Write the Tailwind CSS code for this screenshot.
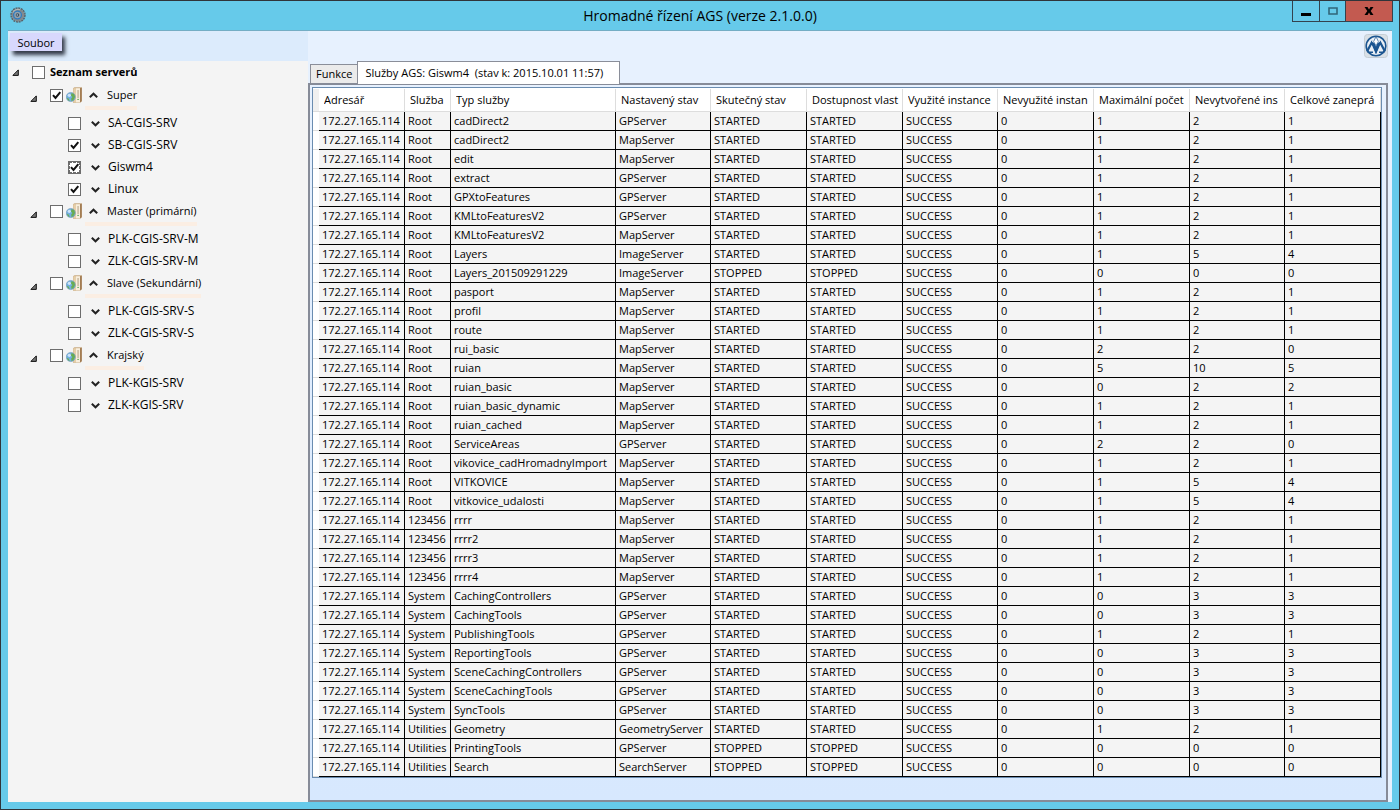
<!DOCTYPE html>
<html lang="cs">
<head>
<meta charset="utf-8">
<title>Hromadné řízení AGS</title>
<script src="https://cdn.jsdelivr.net/npm/@tailwindcss/browser@4"></script>
</head>
<body class="font-['Open_Sans','Noto_Sans',sans-serif] text-[11px] text-black">
<div class="flex min-h-screen flex-col border border-[#30343a] bg-[#66caea] px-[7px] pb-[7px]">
  <header class="grid h-[29px] grid-cols-[1fr_auto_1fr] items-start">
    <svg class="mt-[6px] ml-[2px] size-4" viewBox="0 0 16 16" aria-hidden="true">
      <circle cx="8" cy="8" r="6.900" fill="none" stroke="#596067" stroke-width="1.600" stroke-dasharray="2 0.710"/>
      <circle cx="8" cy="8" r="6.400" fill="#83888c"/>
      <path d="M3 5.500A5.600 5.600 0 0 1 10 2.800" fill="none" stroke="#b3b6b8" stroke-width="1.200"/>
      <circle cx="7.500" cy="8" r="3.900" fill="#92a1ad" stroke="#2e7cc0" stroke-width="1.300"/>
      <circle cx="7.500" cy="8" r="1.800" fill="#3c4d5c"/>
      <circle cx="7.300" cy="8" r="0.800" fill="#a9c8e0"/>
    </svg>
    <h1 class="text-[14px] leading-[29px]">Hromadné řízení AGS (verze 2.1.0.0)</h1>
    <div class="-mr-px flex h-[21px] justify-self-end border border-t-0 border-[#33424e]">
      <button type="button" aria-label="Minimalizovat" class="flex w-[27px] items-center justify-center border-r border-[#33424e]"><svg class="size-3" viewBox="0 0 12 12"><path d="M1 8h10v3H1z"/></svg></button>
      <button type="button" aria-label="Maximalizovat" class="flex w-[26px] items-center justify-center border-r border-[#33424e]"><svg class="size-3" viewBox="0 0 12 12"><path d="M2 3h8v6H2z" fill="none" stroke="#31667a" stroke-width="1.6"/></svg></button>
      <button type="button" aria-label="Zavřít" class="flex w-[46px] items-center justify-center bg-[#c35a50]"><svg class="size-3" viewBox="0 0 12 12"><path d="M1.5 2h3L6 4.4 7.500 2h3L7.700 6l2.800 4h-3L6 7.600 4.500 10h-3L4.300 6z"/></svg></button>
    </div>
  </header>

  <div class="flex grow flex-col border-t border-[#74adc4] bg-[#e7f1fe]">
    <div class="flex h-[30px]">
      <nav class="w-[300px] bg-[#dcebfc] pt-[2px] pl-[2px]">
        <button type="button" class="h-[18px] w-[52px] bg-[#d8d8fd] text-center leading-[20px] shadow-[3px_4px_4px_0px_#333a48]">Soubor</button>
      </nav>
      <div class="flex grow justify-end pt-[3px] pr-1">
        <svg class="size-6" viewBox="0 0 24 24" role="img" aria-label="Logo">
          <rect x="0.500" y="0.500" width="23" height="23" rx="3" fill="#d9e0e6" stroke="#c5ced6"/>
          <circle cx="12" cy="12" r="9.800" fill="#e9eff5" stroke="#1b5590" stroke-width="1.600"/>
          <path d="M3 17.600 7.900 8.200 12 17.500 16.100 8.200 21 17.600" fill="none" stroke="#1b5590" stroke-width="2.200"/>
          <path d="M3.500 18.200H9M15 18.200H20.500" stroke="#1b5590" stroke-width="1.400"/>
          <path d="M8 9.500 10 8 12 12.500 14 8 16 9.500 12 20z" fill="#1b5590"/>
          <path d="M9.600 7.600 12 2.600l2.400 5L12 11.800z" fill="#fff" stroke="#1b5590" stroke-width="0.700"/>
          <path d="M9.300 8.500 7.600 5.800M14.700 8.500l1.700-2.700" stroke="#fff" stroke-width="0.900"/>
        </svg>
      </div>
    </div>

    <div class="flex grow">
      <aside class="w-[300px] shrink-0 bg-[#f4f4f4]" id="tree" aria-label="Seznam serverů"></aside>
      <main class="flex min-w-0 grow flex-col pr-1">
        <div role="tablist" class="flex items-end pl-[2px]">
          <button role="tab" type="button" class="h-[19px] border border-b-0 border-[#8a8e99] bg-[#ebebeb] px-[5px]">Funkce</button>
          <button role="tab" type="button" aria-selected="true" class="relative z-10 -mb-px -ml-px h-[23px] w-[263px] whitespace-pre border border-b-0 border-[#8a8e99] bg-white pl-[7px] text-left">Služby AGS: Giswm4  (stav k: 2015.10.01 11:57)</button>
        </div>
        <section class="grow border-2 border-[#868b98] bg-linear-to-b from-[#e7f1fe] to-[#d7e8fe] py-[2px] pr-[4px] pl-[2px]">
          <div class="border border-[#6a8cb0] bg-white pt-px">
            <table class="w-full table-fixed border-separate border-spacing-0">
              <colgroup>
                <col class="w-[6px]"><col class="w-[86px]"><col class="w-[46px]"><col><col class="w-[95px]"><col class="w-[96px]"><col class="w-[96px]"><col class="w-[95px]"><col class="w-[96px]"><col class="w-[96px]"><col class="w-[95px]"><col class="w-[96px]">
              </colgroup>
              <thead><tr id="head"></tr></thead>
              <tbody id="rows"></tbody>
            </table>
          </div>
        </section>
      </main>
    </div>
  </div>
</div>

<script>
const check = '<svg class="pointer-events-none col-start-1 row-start-1 hidden size-[13px] peer-checked:block" viewBox="0 0 13 13"><path d="M3 6.200 5.500 9 10.300 3.200" fill="none" stroke="#111" stroke-width="2"/></svg>';
let n = 0;
const box = (on, focus) => `<span class="grid size-[13px] shrink-0"><input type="checkbox" id="srv${++n}" ${on ? 'checked' : ''} class="peer col-start-1 row-start-1 size-[13px] appearance-none border border-[#6d6d6d] bg-white ${focus ? 'outline-1 outline-dashed -outline-offset-2 outline-[#6d6d6d]' : ''}">${check}</span>`;
const tri = '<svg class="size-[7px] shrink-0" viewBox="0 0 7 7"><path d="M6.300 0.900V6.400H0.900z" fill="#777" stroke="#111"/></svg>';
const up = '<svg class="h-[7px] w-[9px] shrink-0" viewBox="0 0 9 7"><path d="M0.800 5.200 4.500 1.700 8.200 5.200" fill="none" stroke="#222" stroke-width="2"/></svg>';
const down = '<svg class="h-[7px] w-[9px] shrink-0" viewBox="0 0 9 7"><path d="M0.800 1.800 4.500 5.300 8.200 1.800" fill="none" stroke="#222" stroke-width="2"/></svg>';
const server = `<svg class="size-4 shrink-0" viewBox="0 0 16 16">
  <path d="M7 1.200 8.500 0.300H15.700V14.300L14 15.700H7z" fill="#c9ab83"/>
  <path d="M14.200 1.200 15.700 0.400V14.300L14.200 15.600z" fill="#9a7248"/>
  <path d="M7.300 1.200H10V15.400H7.300z" fill="#e6cfa9"/>
  <path d="M10 1.200H14V15.400H10z" fill="#f8eedd"/>
  <path d="M11.300 4h1.600M11.300 6h1.600M11.300 8h1.600M11.300 10h1.600" stroke="#94805f" stroke-width="0.900"/>
  <path d="M11.300 12.400h1.600" stroke="#5ba55b" stroke-width="1"/>
  <circle cx="4.800" cy="10" r="4.600" fill="#74afe0" stroke="#6892b0" stroke-width="0.500"/>
  <path d="M5.500 6 8.300 7.300 9 10 7.500 13 5.500 14.200 5.200 11.500 6.500 10 5 8.500zM0.800 10.500 2.500 11.500 3.800 14 2 13.300z" fill="#69ad4f"/>
  <circle cx="3.300" cy="8.300" r="1.600" fill="#e4f3ff" opacity="0.800"/></svg>`;
const groups = [
  ['Super', 1, [['SA-CGIS-SRV', 0], ['SB-CGIS-SRV', 1], ['Giswm4', 1, 1], ['Linux', 1]]],
  ['Master (primární)', 0, [['PLK-CGIS-SRV-M', 0], ['ZLK-CGIS-SRV-M', 0]]],
  ['Slave (Sekundární)', 0, [['PLK-CGIS-SRV-S', 0], ['ZLK-CGIS-SRV-S', 0]]],
  ['Krajský', 0, [['PLK-KGIS-SRV', 0], ['ZLK-KGIS-SRV', 0]]]
];
let tree = `<div class="flex h-[23px] items-center pl-1">${tri}<span class="w-[13px]"></span>${box(0)}<label for="srv${n}" class="pl-[5px] font-bold">Seznam serverů</label></div>`;
for (const [name, on, kids] of groups) {
  tree += `<div class="flex h-[28px] items-start pl-[22px]"><span class="flex h-[22px] items-end pb-[4px]">${tri}</span><span class="flex h-[22px] items-center gap-[3px] pl-[13px]">${box(on)}${server}</span><span class="ml-[3px] flex h-[26px] items-start border-b-4 border-[#fbeee3] pl-1"><span class="flex h-[22px] items-center">${up}<label for="srv${n}" class="pl-[9px]">${name}</label></span></span></div>`;
  for (const [kid, kon, focus] of kids)
    tree += `<div class="flex h-[22px] items-center pl-[60px]">${box(kon, focus)}<span class="flex items-center gap-2 pl-[10px]">${down}<label for="srv${n}" class="text-[12px]">${kid}</label></span></div>`;
}
document.getElementById('tree').innerHTML = tree;

const heads = ['Adresář', 'Služba', 'Typ služby', 'Nastavený stav', 'Skutečný stav', 'Dostupnost vlast', 'Využité instance', 'Nevyužité instan', 'Maximální počet', 'Nevytvořené ins', 'Celkové zaneprá'];
document.getElementById('head').innerHTML = '<td class="h-[23px] border-b border-[#dddddd] bg-[#f0f0f0] p-0"></td>' +
  heads.map(h => `<th scope="col" class="h-[23px] border-r border-b border-[#dddddd] bg-white p-0 pr-[2px] pl-[5px] text-left font-normal"><div class="overflow-hidden whitespace-nowrap leading-[18px]">${h}</div></th>`).join('');

const data = `Root|cadDirect2|GPServer|1|2|1
Root|cadDirect2|MapServer|1|2|1
Root|edit|MapServer|1|2|1
Root|extract|GPServer|1|2|1
Root|GPXtoFeatures|GPServer|1|2|1
Root|KMLtoFeaturesV2|GPServer|1|2|1
Root|KMLtoFeaturesV2|MapServer|1|2|1
Root|Layers|ImageServer|1|5|4
Root|Layers_201509291229|ImageServer|0|0|0|STOPPED
Root|pasport|MapServer|1|2|1
Root|profil|MapServer|1|2|1
Root|route|MapServer|1|2|1
Root|rui_basic|MapServer|2|2|0
Root|ruian|MapServer|5|10|5
Root|ruian_basic|MapServer|0|2|2
Root|ruian_basic_dynamic|MapServer|1|2|1
Root|ruian_cached|MapServer|1|2|1
Root|ServiceAreas|GPServer|2|2|0
Root|vikovice_cadHromadnyImport|MapServer|1|2|1
Root|VITKOVICE|MapServer|1|5|4
Root|vitkovice_udalosti|MapServer|1|5|4
123456|rrrr|MapServer|1|2|1
123456|rrrr2|MapServer|1|2|1
123456|rrrr3|MapServer|1|2|1
123456|rrrr4|MapServer|1|2|1
System|CachingControllers|GPServer|0|3|3
System|CachingTools|GPServer|0|3|3
System|PublishingTools|GPServer|1|2|1
System|ReportingTools|GPServer|0|3|3
System|SceneCachingControllers|GPServer|0|3|3
System|SceneCachingTools|GPServer|0|3|3
System|SyncTools|GPServer|0|3|3
Utilities|Geometry|GeometryServer|1|2|1
Utilities|PrintingTools|GPServer|0|0|0|STOPPED
Utilities|Search|SearchServer|0|0|0|STOPPED`;
document.getElementById('rows').innerHTML = data.split('\n').map(line => {
  const [folder, name, type, max, free, busy, state = 'STARTED'] = line.split('|');
  return '<tr><td class="h-[19px] border-b border-[#dddddd] bg-white p-0"></td>' +
    ['172.27.165.114', folder, name, type, state, state, 'SUCCESS', 0, max, free, busy]
      .map(v => `<td class="h-[19px] overflow-hidden whitespace-nowrap border-r border-b border-black bg-[#f4f4f4] p-0 pl-[3px] leading-[18px]">${v}</td>`).join('') + '</tr>';
}).join('');
</script>
</body>
</html>
